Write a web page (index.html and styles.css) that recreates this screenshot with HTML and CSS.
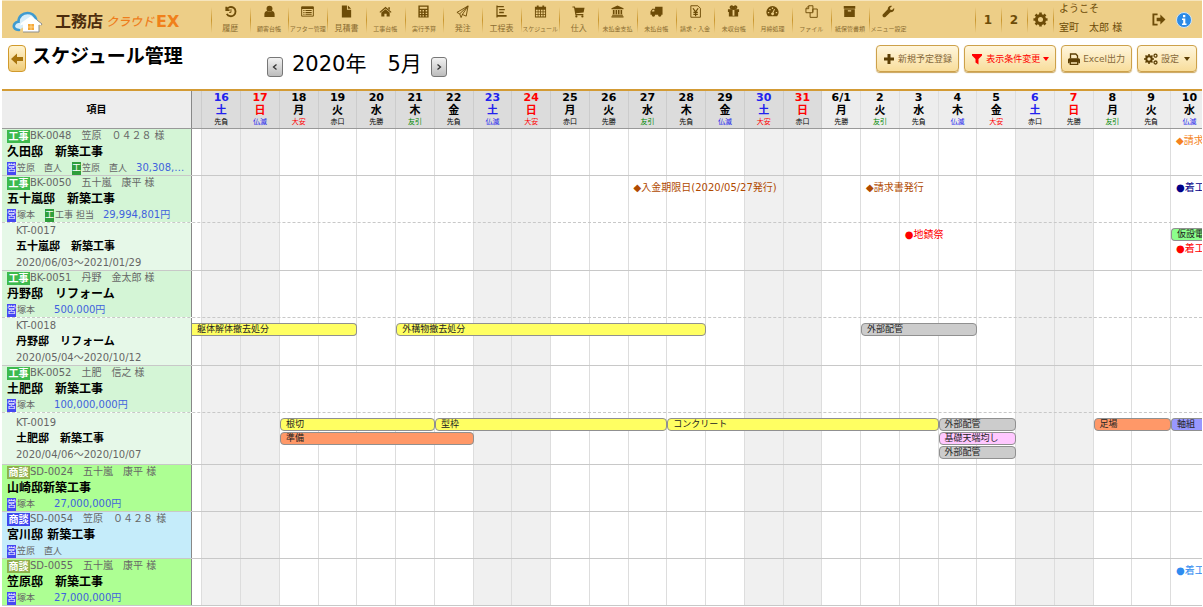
FILE: index.html
```html
<!DOCTYPE html>
<html lang="ja">
<head>
<meta charset="utf-8">
<title>スケジュール管理</title>
<link rel="stylesheet" href="styles.css">
</head>
<body>
<header class="topbar">
  <a class="logo" href="#">
    <svg class="logo-mark" viewBox="0 0 32 22" aria-hidden="true">
      <path d="M7 19C2 19 1 15.500 2.500 13c1-1.700 2.500-2.300 4-2.300C6.500 5 11 2 15.500 2c4 0 7 2 8.500 6" fill="#d8eefa" stroke="#3f9bd0" stroke-width="2.600" stroke-linecap="round"/>
      <path d="M9 12 19 5l11 8-1 1.300-2-.8V21H11v-7.500l-3 1z" fill="#fff"/>
      <path d="m25 9 5 4-1 1.500M27 14v7H11" fill="none" stroke="#8d8f8c"/>
      <path d="M16 13h6v6h-6z" fill="#f7a93b"/>
      <path d="M19 13v6M16 16h6" stroke="#fde2a8" stroke-width=".7"/>
    </svg>
    <span class="logo-name">工務店</span><span class="logo-cloud">クラウド</span><span class="logo-ex">EX</span>
  </a>
  <nav class="menu">
    <a href="#"><svg viewBox="0 0 14 14"><path d="M2.500 2v3.500H6M2.800 5.200A5 5 0 1 1 3 9.500" class="line"/><path d="M7.500 4.500V8H5.500" class="thin"/></svg><span class="wide">履歴</span></a>
    <a href="#"><svg viewBox="0 0 14 14"><circle cx="7" cy="4" r="3.200"/><path d="M1.500 13V10c0-2 1-3.300 3-3.500 1.500 1.300 3.500 1.300 5 0 2 .2 3 1.500 3 3.500v3z"/></svg><span>顧客台帳</span></a>
    <a href="#"><svg viewBox="0 0 14 14"><path d="M.7 2h12.600v10H.7z" class="thin"/><path d="M.7 2h12.600v2.200H.7zM2.500 5.500h1.300v1H2.500zm2.300 0h6.700v1H4.800zM2.500 7.500h1.300v1H2.500zm2.300 0h6.700v1H4.800zm-2.300 2h1.300v1H2.500zm2.300 0h6.700v1H4.800z"/></svg><span>アフター管理</span></a>
    <a href="#"><svg viewBox="0 0 14 14"><path d="M2 .5h5.500V5H12v8.500H2zM8.500.5 12 4H8.500z"/></svg><span class="wide">見積書</span></a>
    <a href="#"><svg viewBox="0 0 14 14"><path d="m7 2 6.500 5.500-.8.900L7 3.800 1.300 8.400l-.8-.9z"/><path d="m7 4.500 4.500 3.700V12.500H8.200V9.300H5.800v3.200H2.500V8.200zM10 2.500h1.700v3L10 4z"/></svg><span>工事台帳</span></a>
    <a href="#"><svg viewBox="0 0 14 14"><path fill-rule="evenodd" d="M1.500.5h11v13h-11zM3 2v2h8V2zm0 3.500V7h1.500V5.500zm3 0V7h1.500V5.500zm3.300 0V7H11V5.500zM3 8.300v1.500h1.500V8.300zm3 0v1.500h1.500V8.300zm3.300 0v1.500H11V8.300zM3 11v1.500h1.500V11zm3 0v1.500h1.500V11zm3.300 0v1.500H11V11z"/></svg><span>実行予算</span></a>
    <a href="#"><svg viewBox="0 0 14 14"><path d="M13 1 1 8l3 1.500L13 1l-2 11-4.500-2M4 9.500l1.500 4L7 10l6-9" class="thin"/></svg><span class="wide">発注</span></a>
    <a href="#"><svg viewBox="0 0 14 14"><path d="M1.500.5h1.300v13H1.500zM2.500 1h7v1.500h-7zm2 3.200h6v1.500h-6zm0 3.200h5v1.500h-5zm-2 3.300h10v2h-10z"/></svg><span class="wide">工程表</span></a>
    <a href="#"><svg viewBox="0 0 14 14"><path fill-rule="evenodd" d="M3 .5h2V2h4V.5h2V2h2v11.500H1V2h2zM2 5.200v1.800h2V5.200zm2.800 0v1.800h1.800V5.200zm2.700 0v1.800h1.800V5.200zm2.700 0v1.800H12V5.200zM2 7.900v1.800h2V7.900zm2.800 0v1.800h1.800V7.900zm2.700 0v1.800h1.800V7.900zm2.700 0v1.800H12V7.900zM2 10.600v1.900h2v-1.900zm2.800 0v1.900h1.800v-1.900zm2.700 0v1.900h1.800v-1.900zm2.700 0v1.900H12v-1.900z"/></svg><span>スケジュール</span></a>
    <a href="#"><svg viewBox="0 0 14 14"><path d="M.5 1.500h2.600l.4 1.500h10L12.500 8l-8 .9.200.9h7.500V11H3.700L2.200 2.700H.5z"/><circle cx="4.700" cy="12.300" r="1.200"/><circle cx="11.200" cy="12.300" r="1.200"/></svg><span class="wide">仕入</span></a>
    <a href="#"><svg viewBox="0 0 14 14"><path d="m7 .5 6.500 3v1H.5v-1zM2 5.500h1.800V10H2zm2.900 0h1.700V10H4.900zm2.600 0h1.700V10H7.500zm2.800 0H12V10h-1.700zM1.200 10.500h11.600v1.200H1.200zM.5 12.200h13v1.300H.5z"/></svg><span>未払金支払</span></a>
    <a href="#"><svg viewBox="0 0 14 14"><path fill-rule="evenodd" d="M5.500 2h8v8.500H.5V7l2-3h3zM4.700 5.200H3L1.800 7h2.900z"/><circle cx="3.700" cy="10.800" r="1.800"/><circle cx="10.500" cy="10.800" r="1.800"/></svg><span>未払台帳</span></a>
    <a href="#"><svg viewBox="0 0 14 14"><path d="M2 .8h7.500L12.300 3.600v9.600H2z" class="thin"/><path d="m4.300 3.500 2.800 4 2.800-4M7.100 7.500V12M4.700 8h4.800M4.700 10h4.800" class="stroke"/></svg><span>請求・入金</span></a>
    <a href="#"><svg viewBox="0 0 14 14"><path d="M7 4C5 4 3.500 3.500 3.800 2.200 4.500.5 6.500 1.500 7 4c.5-2.500 2.500-3.500 3.200-1.800C10.500 3.500 9 4 7 4" class="line"/><path fill-rule="evenodd" d="M1 4.500h12V7.500H12V12.500H2V7.500H1zM6 5.500V11.500h2V5.500z"/></svg><span>未収台帳</span></a>
    <a href="#"><svg viewBox="0 0 14 14"><path fill-rule="evenodd" d="M2 12a6.600 6.600 0 1 1 10 0zM2 7.500v1.300h1.500V7.500zm1.500-3.200v1.400H5V4.300zM6.300 2.700v1.500h1.400V2.700zm4.200 4.800v1.300H12V7.500zM8.700 4.200 6.800 8a1.500 1.500 0 1 0 1.200.3l1.700-3.700z"/></svg><span>月締処理</span></a>
    <a href="#"><svg viewBox="0 0 14 14"><path d="M4 .8h4.500v7.500H1V4zM4 .8V4H1M8.500 4.300h4.700v9H5.500V8.300M8.500 4.300 8.300 7.500" class="thin"/></svg><span>ファイル</span></a>
    <a href="#"><svg viewBox="0 0 14 14"><path fill-rule="evenodd" d="M.8 1h12.400v3H.8zM1.300 4.700h11.400V13H1.300zM5.200 5.700v1.200h3.600V5.700z"/></svg><span>紙保管書類</span></a>
    <a href="#"><svg viewBox="0 0 14 14"><path d="M13 3.200 10.800 5.400 9 5 8.600 3.200 10.800 1C8.500.2 6 1.700 6.200 4.700L.8 10.200c-1 1.800.9 3.800 2.900 2.700L9 7.700C12 8 13.800 5.500 13 3.200z"/></svg><span>メニュー設定</span></a>
  </nav>
  <div class="tools">
    <a class="tool" href="#">1</a>
    <a class="tool" href="#">2</a>
    <a class="tool" href="#" aria-label="設定"><svg viewBox="0 0 16 16"><circle cx="8" cy="8" r="4.300" fill="none" stroke="currentColor" stroke-width="3.200"/><path d="M8 .5v3M8 12.500v3M.5 8h3M12.500 8h3M2.700 2.700l2 2M11.300 11.300l2 2M13.300 2.700l-2 2M4.700 11.300l-2 2" stroke="currentColor" stroke-width="2.800"/></svg></a>
    <div class="user"><span>ようこそ</span><span>室町　太郎 様</span></div>
    <a class="exit" href="#" aria-label="ログアウト"><svg viewBox="0 0 16 14"><path d="M7 1.500H2.500v11H7" class="line"/><path d="M6 5h4V1.500L15.500 7 10 12.500V9H6z"/></svg></a>
    <a class="info" href="#" aria-label="情報"><svg viewBox="0 0 16 16"><circle cx="8" cy="8" r="7.500" fill="#2b8ae6" stroke="#cfe4f4"/><path d="M7 3h2.300v2.200H7zM6 6.500h3.300v5h1.200V13H6v-1.500h1.200V8H6z" fill="#fff"/></svg></a>
  </div>
</header>

<section class="heading">
  <button class="back" aria-label="戻る"><svg viewBox="0 0 12 12"><path d="M0 6 6 .5V4h6v4H6v3.500z"/></svg></button>
  <h1>スケジュール管理</h1>
  <div class="month">
    <button class="step" aria-label="前の月"><svg viewBox="0 0 6 8"><path d="M4.500 1.500 1.500 4l3 2.500" class="stroke"/></svg></button>
    <span>2020年　5月</span>
    <button class="step" aria-label="次の月"><svg viewBox="0 0 6 8"><path d="m1.500 1.500 3 2.500-3 2.500" class="stroke"/></svg></button>
  </div>
  <div class="actions">
    <button class="action"><svg viewBox="0 0 12 12"><path d="M4.500 1h3v3.500H11v3H7.500V11h-3V7.500H1v-3h3.500z"/></svg>新規予定登録</button>
    <button class="action alert"><svg viewBox="0 0 12 12"><path d="M1 1h10v1.500L7.500 6v5.500l-3-2V6L1 2.500z"/></svg>表示条件変更<i class="caret"></i></button>
    <button class="action"><svg viewBox="0 0 12 12"><path d="M2.500 5.500V1h5.300l1.700 1.700v2.800" class="stroke"/><path d="M0 7c0-1 .5-1.700 1.500-1.700h9c1 0 1.500.7 1.500 1.700v3.300h-1.700V8.500H1.700v1.800H0z"/><path d="M2.300 8.500h7.400v2.800H2.300z" class="stroke"/></svg>Excel出力</button>
    <button class="action"><svg class="gears" viewBox="0 0 14 12"><circle cx="5" cy="6" r="2.700" fill="none" stroke="currentColor" stroke-width="2"/><path d="M5 1v2M5 9v2M0 6h2M8 6h2M1.500 2.500l1.400 1.400M7 8l1.500 1.500M8.500 2.500 7.100 3.900M3 8 1.500 9.500" stroke="currentColor" stroke-width="1.500"/><circle cx="11.500" cy="2.700" r="1.500" class="stroke"/><circle cx="11.500" cy="9.500" r="1.500" class="stroke"/></svg>設定<i class="caret"></i></button>
  </div>
</section>

<main class="gantt">
  <div class="head">
    <div class="corner">項目</div>
    <div class="days">
      <div class="day may"></div>
      <div class="day may sat"><b>16</b><b>土</b><small>先負</small></div>
      <div class="day may sun"><b>17</b><b>日</b><small class="blue">仏滅</small></div>
      <div class="day may"><b>18</b><b>月</b><small class="red">大安</small></div>
      <div class="day may"><b>19</b><b>火</b><small>赤口</small></div>
      <div class="day may"><b>20</b><b>水</b><small>先勝</small></div>
      <div class="day may"><b>21</b><b>木</b><small class="green">友引</small></div>
      <div class="day may"><b>22</b><b>金</b><small>先負</small></div>
      <div class="day may sat"><b>23</b><b>土</b><small class="blue">仏滅</small></div>
      <div class="day may sun"><b>24</b><b>日</b><small class="red">大安</small></div>
      <div class="day may"><b>25</b><b>月</b><small>赤口</small></div>
      <div class="day may"><b>26</b><b>火</b><small>先勝</small></div>
      <div class="day may"><b>27</b><b>水</b><small class="green">友引</small></div>
      <div class="day may"><b>28</b><b>木</b><small>先負</small></div>
      <div class="day may"><b>29</b><b>金</b><small class="blue">仏滅</small></div>
      <div class="day may sat"><b>30</b><b>土</b><small class="red">大安</small></div>
      <div class="day may sun"><b>31</b><b>日</b><small>赤口</small></div>
      <div class="day"><b>6/1</b><b>月</b><small>先勝</small></div>
      <div class="day"><b>2</b><b>火</b><small class="green">友引</small></div>
      <div class="day"><b>3</b><b>水</b><small>先負</small></div>
      <div class="day"><b>4</b><b>木</b><small class="blue">仏滅</small></div>
      <div class="day"><b>5</b><b>金</b><small class="red">大安</small></div>
      <div class="day sat"><b>6</b><b>土</b><small>赤口</small></div>
      <div class="day sun"><b>7</b><b>日</b><small>先勝</small></div>
      <div class="day"><b>8</b><b>月</b><small class="green">友引</small></div>
      <div class="day"><b>9</b><b>火</b><small>先負</small></div>
      <div class="day cut"><b>10</b><b>水</b><small class="blue">仏滅</small></div>
    </div>
  </div>
  <div class="body">
    <div class="stripes">
      <i></i><i class="off"></i><i class="off"></i><i></i><i></i><i></i><i></i><i></i><i class="off"></i><i class="off"></i><i></i><i></i><i></i><i></i><i></i><i class="off"></i><i class="off"></i><i></i><i></i><i></i><i></i><i></i><i class="off"></i><i class="off"></i><i></i><i></i><i></i>
    </div>
    <div class="rows">
      <div class="row">
        <div class="label work">
          <div class="line1"><span class="tag">工事</span>BK-0048　笠原　０４２８ 様</div>
          <div class="name">久田邸　新築工事</div>
          <div class="staff"><span class="mark">営</span>笠原　直人<span class="mark site">工</span>笠原　直人<span class="amount">30,308,…</span></div>
        </div>
        <div class="track"><span class="event orange" style="grid-area:1/27/2/28">◆請求書発行</span></div>
      </div>
      <div class="row parent">
        <div class="label work">
          <div class="line1"><span class="tag">工事</span>BK-0050　五十嵐　康平 様</div>
          <div class="name">五十嵐邸　新築工事</div>
          <div class="staff"><span class="mark">営</span>塚本<span class="mark site">工</span>工事 担当<span class="amount">29,994,801円</span></div>
        </div>
        <div class="track">
          <span class="event brown" style="grid-area:1/13/2/14">◆入金期限日(2020/05/27発行)</span>
          <span class="event brown" style="grid-area:1/19/2/20">◆請求書発行</span>
          <span class="event navy" style="grid-area:1/27/2/28">●着工</span>
        </div>
      </div>
      <div class="row child">
        <div class="label task">
          <div>KT-0017</div>
          <div class="name">五十嵐邸　新築工事</div>
          <div>2020/06/03～2021/01/29</div>
        </div>
        <div class="track">
          <span class="event red" style="grid-area:1/20/2/21">●地鎮祭</span>
          <span class="bar lime open-end" style="grid-area:1/27/2/28">仮設電気</span>
          <span class="event red" style="grid-area:2/27/3/28">●着工</span>
        </div>
      </div>
      <div class="row parent">
        <div class="label work">
          <div class="line1"><span class="tag">工事</span>BK-0051　丹野　金太郎 様</div>
          <div class="name">丹野邸　リフォーム</div>
          <div class="staff"><span class="mark">営</span>塚本<span class="amount alone">500,000円</span></div>
        </div>
        <div class="track"></div>
      </div>
      <div class="row child">
        <div class="label task">
          <div>KT-0018</div>
          <div class="name">丹野邸　リフォーム</div>
          <div>2020/05/04～2020/10/12</div>
        </div>
        <div class="track">
          <span class="bar yellow open-start" style="grid-area:1/1/2/6">躯体解体撤去処分</span>
          <span class="bar yellow" style="grid-area:1/7/2/15">外構物撤去処分</span>
          <span class="bar gray" style="grid-area:1/19/2/22">外部配管</span>
        </div>
      </div>
      <div class="row parent">
        <div class="label work">
          <div class="line1"><span class="tag">工事</span>BK-0052　土肥　信之 様</div>
          <div class="name">土肥邸　新築工事</div>
          <div class="staff"><span class="mark">営</span>塚本<span class="amount alone">100,000,000円</span></div>
        </div>
        <div class="track"></div>
      </div>
      <div class="row child stacked">
        <div class="label task">
          <div>KT-0019</div>
          <div class="name">土肥邸　新築工事</div>
          <div>2020/04/06～2020/10/07</div>
        </div>
        <div class="track">
          <span class="bar yellow" style="grid-area:1/4/2/8">根切</span>
          <span class="bar yellow" style="grid-area:1/8/2/14">型枠</span>
          <span class="bar yellow" style="grid-area:1/14/2/21">コンクリート</span>
          <span class="bar gray" style="grid-area:1/21/2/23">外部配管</span>
          <span class="bar coral" style="grid-area:1/25/2/27">足場</span>
          <span class="bar violet open-end" style="grid-area:1/27/2/28">軸組</span>
          <span class="bar coral" style="grid-area:2/4/3/9">準備</span>
          <span class="bar pink" style="grid-area:2/21/3/23">基礎天端均し</span>
          <span class="bar gray" style="grid-area:3/21/4/23">外部配管</span>
        </div>
      </div>
      <div class="row">
        <div class="label deal">
          <div class="line1"><span class="tag">商談</span>SD-0024　五十嵐　康平 様</div>
          <div class="name">山崎邸新築工事</div>
          <div class="staff"><span class="mark">営</span>塚本<span class="amount alone">27,000,000円</span></div>
        </div>
        <div class="track"></div>
      </div>
      <div class="row">
        <div class="label lead">
          <div class="line1"><span class="tag">商談</span>SD-0054　笠原　０４２８ 様</div>
          <div class="name">宮川邸 新築工事</div>
          <div class="staff"><span class="mark">営</span>笠原　直人</div>
        </div>
        <div class="track"></div>
      </div>
      <div class="row">
        <div class="label deal">
          <div class="line1"><span class="tag">商談</span>SD-0055　五十嵐　康平 様</div>
          <div class="name">笠原邸　新築工事</div>
          <div class="staff"><span class="mark">営</span>塚本<span class="amount alone">27,000,000円</span></div>
        </div>
        <div class="track"><span class="event sky" style="grid-area:1/27/2/28">●着工</span></div>
      </div>
    </div>
  </div>
</main>
</body>
</html>
```
FILE: styles.css
```css
* { box-sizing: border-box; }
body {
  margin: 0;
  padding: 0 1px 0 2px;
  background: #fff;
  color: #000;
  font: 10px/14px "DejaVu Sans", "Noto Sans CJK JP", sans-serif;
  overflow: hidden;
}
a { color: inherit; text-decoration: none; }
button { font: inherit; color: inherit; padding: 0; cursor: pointer; }
svg { display: block; fill: currentColor; flex: none; }
svg .line { fill: none; stroke: currentColor; stroke-width: 2; }
svg .stroke { fill: none; stroke: currentColor; stroke-width: 1.3; }
svg .thin { fill: none; stroke: currentColor; stroke-width: 1; }

/* top bar */
.topbar {
  display: flex;
  align-items: stretch;
  height: 38px;
  background: #edce87;
  border-top: 1px solid #f6e5bd;
  color: #6d4c08;
}
.logo { display: flex; align-items: center; flex: none; width: 209px; padding: 4px 0 0 10px; white-space: nowrap; }
.logo-mark { width: 32px; height: 22px; margin-right: 11px; }
.logo-name { font-size: 16px; font-weight: 700; color: #4c2c0c; }
.logo-cloud { margin-left: 3px; font-size: 12px; font-weight: 500; font-style: italic; color: #ee7d1c; }
.logo-ex { margin-left: 2px; font-size: 16px; font-weight: 700; color: #f0801a; }
.menu { display: grid; grid-template-columns: repeat(18, 1fr); flex: 0 1 697px; }
.menu a {
  display: flex;
  flex-direction: column;
  align-items: center;
  gap: 4px;
  padding-top: 4px;
  min-width: 0;
  background: linear-gradient(#edce87, #c9962e, #edce87) left 0 top 6px / 1px 26px no-repeat;
}
.menu svg { width: 13px; height: 13px; }
.menu span { font-size: 6px; line-height: 14px; white-space: nowrap; color: #8b6d30; }
.menu .wide { font-size: 8px; }
.tools { display: flex; align-items: center; margin-left: auto; }
.tool {
  display: grid;
  place-items: center;
  width: 26px;
  height: 36px;
  font-size: 12px;
  font-weight: 700;
  background: linear-gradient(#edce87, #c9962e, #edce87) left 0 top 5px / 1px 26px no-repeat;
}
.tool svg { width: 15px; height: 15px; }
.user {
  display: flex;
  flex-direction: column;
  justify-content: space-between;
  width: 98px;
  height: 36px;
  padding: 0 0 3px 6px;
  background: linear-gradient(#edce87, #c9962e, #edce87) left 0 top 5px / 1px 26px no-repeat;
}
.exit svg { width: 15px; height: 13px; }
.info { margin: 0 10px; }
.info svg { width: 16px; height: 16px; }

/* page heading */
.heading { display: flex; height: 51px; padding: 7px 5px 0 6px; }
.back {
  display: grid;
  place-items: center;
  width: 18px;
  height: 27px;
  border: 1px solid #d19a2c;
  border-radius: 4px;
  background: linear-gradient(#fff3cf, #efcb78);
  color: #a8740c;
}
.back svg { width: 12px; height: 12px; }
h1 { margin: 0 0 0 6px; width: 235px; font-size: 19px; line-height: 22px; font-weight: 700; white-space: nowrap; }
.month { display: flex; gap: 9px; padding-top: 12px; font-size: 21px; line-height: 14px; white-space: nowrap; }
.step {
  display: grid;
  place-items: center;
  width: 16px;
  height: 20px;
  border: 1px solid #777;
  border-radius: 3px;
  background: linear-gradient(#f2f2f2, #bcbcbc);
  color: #333;
}
.step svg { width: 6px; height: 8px; }
.actions { display: flex; gap: 5px; margin-left: auto; }
.action {
  display: flex;
  align-items: center;
  gap: 3px;
  height: 27px;
  padding: 0 6px;
  border: 1px solid #cda14a;
  border-radius: 4px;
  background: linear-gradient(#fff6dd, #f8dd9b);
  box-shadow: 0 1px 1px #c9a45a;
  color: #85683a;
  font-size: 9px;
  white-space: nowrap;
}
.action svg { width: 12px; height: 12px; color: #5c3f05; }
.action .gears { width: 14px; }
.action.alert, .action.alert svg { color: #f00; }
.caret { border: 3px solid transparent; border-top: 4px solid #5c3f05; border-bottom: 0; }
.action .caret { margin-left: 2px; }
.alert .caret { margin-left: 0; border-top-color: #f00; }

/* schedule */
.gantt { border-top: 2px solid #d39b35; }
.head, .row { display: grid; grid-template-columns: 190px 1fr; }
.head { height: 38px; border-bottom: 1px solid #999; background: #ededed; }
.corner { display: grid; place-items: center; font-weight: 700; border-right: 1px solid #888; }
.days, .track, .stripes { display: grid; grid-template-columns: 27fr repeat(25, 100fr) 80fr; min-width: 0; }
.day { display: flex; flex-direction: column; align-items: center; min-width: 0; border-right: 1px solid #dedede; white-space: nowrap; }
.day b { font-size: 11px; line-height: 13px; }
.day small { font-size: 7px; line-height: 10px; }
.may { background: #dcdcdc; border-right-color: #ccc; }
.cut { padding-left: 6px; border-right: 0; }
.sat b, .blue { color: #22e; }
.sun b, .red { color: #f00; }
.green { color: #080; }
.body { display: grid; }
.stripes, .rows { grid-area: 1 / 1; }
.stripes { margin-left: 190px; }
.stripes i { border-right: 1px solid #ddd; }
.stripes i:last-child { border-right: 0; }
.stripes .off { background: #f0f0f0; }
.row { min-height: 47px; border-bottom: 1px solid #c8c8c8; }
.parent { border-bottom-style: dashed; }
.child { min-height: 48px; }
.stacked { min-height: 52px; }
.label {
  display: flex;
  flex-direction: column;
  justify-content: center;
  gap: 2px;
  min-width: 0;
  padding-left: 5px;
  border-right: 1px solid #888;
  color: #666;
  white-space: nowrap;
  overflow: hidden;
}
.task { padding-left: 14px; background: #e6f8e8; }
.work { background: #d4f5d6; }
.deal { background: #adff93; }
.lead { background: #c5ecfa; }
.name { font-size: 12px; font-weight: 700; color: #000; }
.task .name { font-size: 11px; }
.line1, .staff { display: flex; align-items: center; }
.staff { font-size: 9px; }
.tag { width: 23px; line-height: 13px; text-align: center; font-weight: 700; color: #fff; background: #3dba4e; }
.deal .tag { background: #8fb04c; }
.lead .tag { background: #3f48ee; }
.mark { width: 9px; margin-right: 1px; line-height: 13px; text-align: center; color: #fff; background: #4648f2; }
.site { margin-left: 10px; background: #2f9e3c; }
.amount { margin-left: 9px; font-size: 10px; color: #3f62dd; }
.alone { margin-left: 19px; }
.track { grid-template-rows: 13px 13px 13px; row-gap: 1px; padding-top: 5px; overflow: hidden; }
.event { line-height: 13px; padding-left: 5px; white-space: nowrap; min-width: 0; }
.bar {
  min-width: 0;
  padding-left: 5px;
  border: 1px solid #909090;
  border-radius: 4px;
  font-size: 9px;
  line-height: 11px;
  white-space: nowrap;
  overflow: hidden;
  color: #222;
}
.open-start { border-left: 0; border-radius: 0 4px 4px 0; }
.open-end { border-right: 0; border-radius: 4px 0 0 4px; }
.yellow { background: #ffff62; }
.gray { background: #ccc; }
.coral { background: #ff9868; }
.pink { background: #ffc8ff; }
.lime { background: #8cff8c; }
.violet { background: #9898ff; }
.orange { color: #f58220; }
.brown { color: #b04a00; }
.navy { color: #000088; }
.sky { color: #2f8cf0; }
```
